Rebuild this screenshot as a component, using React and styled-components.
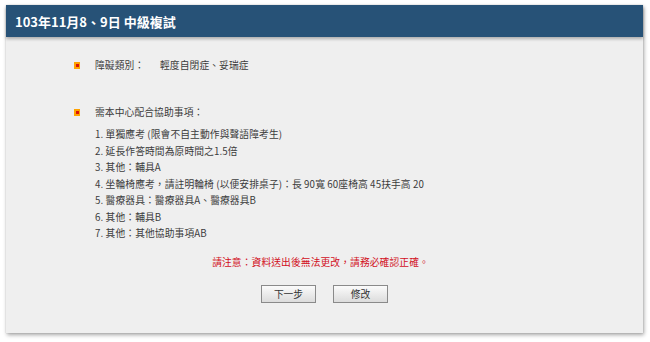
import React from 'react';
import styled, { createGlobalStyle } from 'styled-components';

const GlobalStyle = createGlobalStyle`
  html, body {
    margin: 0;
    padding: 0;
    background: #fff;
  }
  body {
    font-family: "Noto Sans CJK TC", "Noto Sans", sans-serif;
  }
`;

const Page = styled.div`
  width: 650px;
  height: 342px;
  padding: 5px 7px 0 6px;
  box-sizing: border-box;
`;

const Panel = styled.div`
  background: #efefef;
  height: 328px;
  display: flex;
  flex-direction: column;
  box-shadow: 1px 2px 4px rgba(0, 0, 0, 0.35), 0 0 1px rgba(0, 0, 0, 0.2);
`;

const Header = styled.div`
  height: 32px;
  background: #275277;
  color: #fff;
  font-size: 13px;
  font-weight: 700;
  display: flex;
  align-items: center;
  padding-left: 9px;
  box-shadow: 0 2px 3px rgba(0, 0, 0, 0.28);
  position: relative;
`;

const Body = styled.div`
  flex: 1;
  padding: 20px 0 0 68px;
  font-size: 9.75px;
  letter-spacing: 0.1px;
  color: #3c3c3c;
  display: flex;
  flex-direction: column;
`;

const Item = styled.div`
  display: flex;
  align-items: center;
  height: 16px;
  margin-top: ${p => p.$gap || 0}px;
`;

const Bullet = styled.span`
  width: 6px;
  height: 7px;
  background: #ffa200;
  position: relative;
  margin-right: 15px;
  flex-shrink: 0;

  &::after {
    content: '';
    position: absolute;
    left: 2px;
    top: 2px;
    width: 3px;
    height: 3px;
    background: #d8140c;
  }
`;

const Label = styled.span`
  width: 65px;
`;

const List = styled.ol`
  list-style: none;
  margin: 6px 0 0 21px;
  padding: 0;
  line-height: 16.5px;
`;

const Notice = styled.div`
  color: #d2101c;
  text-align: center;
  margin: 12px 0 0 -68px;
  padding-right: 8px;
  line-height: 16px;
`;

const Buttons = styled.div`
  display: flex;
  justify-content: center;
  gap: 17px;
  margin: 15px 0 0 -68px;
`;

const Button = styled.button`
  width: 55px;
  height: 18px;
  padding: 0;
  border: 1px solid #8a8a8a;
  background: linear-gradient(#fbfbfb, #dcdcdc);
  color: #333;
  font-family: inherit;
  font-size: 9.75px;
  cursor: pointer;
`;

const items = [
  '1. 單獨應考 (限會不自主動作與聲語障考生)',
  '2. 延長作答時間為原時間之1.5倍',
  '3. 其他：輔具A',
  '4. 坐輪椅應考，請註明輪椅 (以便安排桌子)：長 90寬 60座椅高 45扶手高 20',
  '5. 醫療器具：醫療器具A、醫療器具B',
  '6. 其他：輔具B',
  '7. 其他：其他協助事項AB',
];

export default function App() {
  return (
    <Page>
      <GlobalStyle />
      <Panel>
        <Header>103年11月8、9日 中級複試</Header>
        <Body>
          <Item>
            <Bullet />
            <Label>障礙類別：</Label>
            <span>輕度自閉症、妥瑞症</span>
          </Item>
          <Item $gap={31}>
            <Bullet />
            <span>需本中心配合協助事項：</span>
          </Item>
          <List>
            {items.map(t => (
              <li key={t}>{t}</li>
            ))}
          </List>
          <Notice>請注意：資料送出後無法更改，請務必確認正確。</Notice>
          <Buttons>
            <Button>下一步</Button>
            <Button>修改</Button>
          </Buttons>
        </Body>
      </Panel>
    </Page>
  );
}
